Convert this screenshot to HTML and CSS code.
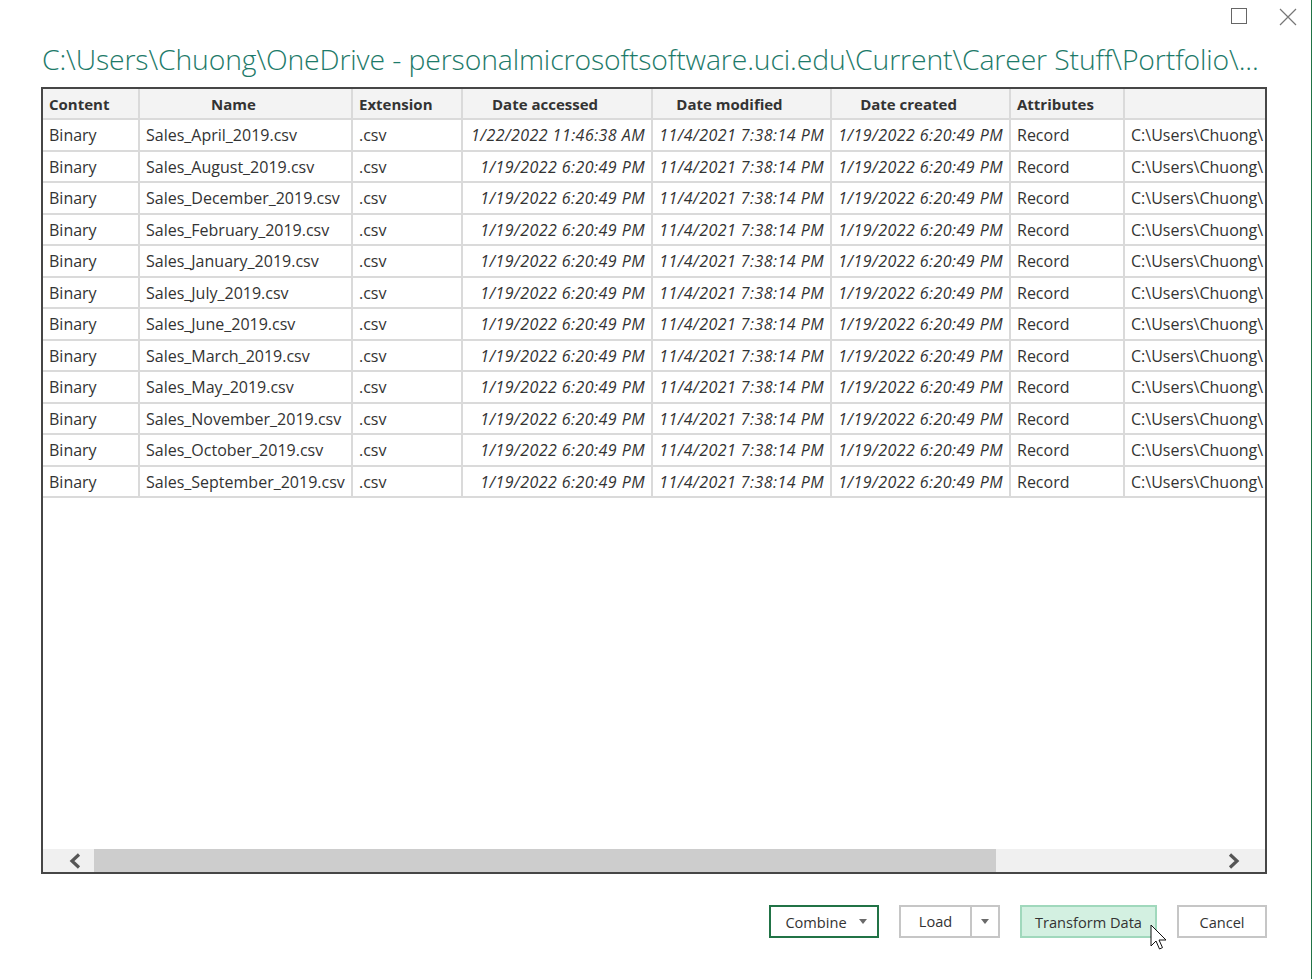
FILE: index.html
```html
<!DOCTYPE html>
<html>
<head>
<meta charset="utf-8">
<link rel="stylesheet" href="styles.css">
</head>
<body>
<div class="window">
  <div class="controls">
    <span class="ctl"><svg width="17" height="17" viewBox="0 0 17 17"><rect x="0.5" y="0.5" width="15" height="15" fill="none" stroke="#666" stroke-width="1"/></svg></span>
    <span class="ctl"><svg width="18" height="18" viewBox="0 0 18 18"><path d="M1 1 L17 17 M17 1 L1 17" stroke="#777" stroke-width="1.2" fill="none"/></svg></span>
  </div>
  <h1 class="title">C:\Users\Chuong\OneDrive - personalmicrosoftsoftware.uci.edu\Current\Career Stuff\Portfolio\...</h1>
  <div class="frame">
    <div class="grid">
      <div class="row head">
        <div class="c left">Content</div>
        <div class="c center">Name</div>
        <div class="c left">Extension</div>
        <div class="c center">Date accessed</div>
        <div class="c center">Date modified</div>
        <div class="c center">Date created</div>
        <div class="c left">Attributes</div>
        <div class="c left"></div>
      </div>
      <div class="row"><div class="c">Binary</div><div class="c">Sales_April_2019.csv</div><div class="c">.csv</div><div class="c dt">1/22/2022 11:46:38 AM</div><div class="c dt">11/4/2021 7:38:14 PM</div><div class="c dt">1/19/2022 6:20:49 PM</div><div class="c">Record</div><div class="c">C:\Users\Chuong\</div></div>
      <div class="row"><div class="c">Binary</div><div class="c">Sales_August_2019.csv</div><div class="c">.csv</div><div class="c dt">1/19/2022 6:20:49 PM</div><div class="c dt">11/4/2021 7:38:14 PM</div><div class="c dt">1/19/2022 6:20:49 PM</div><div class="c">Record</div><div class="c">C:\Users\Chuong\</div></div>
      <div class="row"><div class="c">Binary</div><div class="c">Sales_December_2019.csv</div><div class="c">.csv</div><div class="c dt">1/19/2022 6:20:49 PM</div><div class="c dt">11/4/2021 7:38:14 PM</div><div class="c dt">1/19/2022 6:20:49 PM</div><div class="c">Record</div><div class="c">C:\Users\Chuong\</div></div>
      <div class="row"><div class="c">Binary</div><div class="c">Sales_February_2019.csv</div><div class="c">.csv</div><div class="c dt">1/19/2022 6:20:49 PM</div><div class="c dt">11/4/2021 7:38:14 PM</div><div class="c dt">1/19/2022 6:20:49 PM</div><div class="c">Record</div><div class="c">C:\Users\Chuong\</div></div>
      <div class="row"><div class="c">Binary</div><div class="c">Sales_January_2019.csv</div><div class="c">.csv</div><div class="c dt">1/19/2022 6:20:49 PM</div><div class="c dt">11/4/2021 7:38:14 PM</div><div class="c dt">1/19/2022 6:20:49 PM</div><div class="c">Record</div><div class="c">C:\Users\Chuong\</div></div>
      <div class="row"><div class="c">Binary</div><div class="c">Sales_July_2019.csv</div><div class="c">.csv</div><div class="c dt">1/19/2022 6:20:49 PM</div><div class="c dt">11/4/2021 7:38:14 PM</div><div class="c dt">1/19/2022 6:20:49 PM</div><div class="c">Record</div><div class="c">C:\Users\Chuong\</div></div>
      <div class="row"><div class="c">Binary</div><div class="c">Sales_June_2019.csv</div><div class="c">.csv</div><div class="c dt">1/19/2022 6:20:49 PM</div><div class="c dt">11/4/2021 7:38:14 PM</div><div class="c dt">1/19/2022 6:20:49 PM</div><div class="c">Record</div><div class="c">C:\Users\Chuong\</div></div>
      <div class="row"><div class="c">Binary</div><div class="c">Sales_March_2019.csv</div><div class="c">.csv</div><div class="c dt">1/19/2022 6:20:49 PM</div><div class="c dt">11/4/2021 7:38:14 PM</div><div class="c dt">1/19/2022 6:20:49 PM</div><div class="c">Record</div><div class="c">C:\Users\Chuong\</div></div>
      <div class="row"><div class="c">Binary</div><div class="c">Sales_May_2019.csv</div><div class="c">.csv</div><div class="c dt">1/19/2022 6:20:49 PM</div><div class="c dt">11/4/2021 7:38:14 PM</div><div class="c dt">1/19/2022 6:20:49 PM</div><div class="c">Record</div><div class="c">C:\Users\Chuong\</div></div>
      <div class="row"><div class="c">Binary</div><div class="c">Sales_November_2019.csv</div><div class="c">.csv</div><div class="c dt">1/19/2022 6:20:49 PM</div><div class="c dt">11/4/2021 7:38:14 PM</div><div class="c dt">1/19/2022 6:20:49 PM</div><div class="c">Record</div><div class="c">C:\Users\Chuong\</div></div>
      <div class="row"><div class="c">Binary</div><div class="c">Sales_October_2019.csv</div><div class="c">.csv</div><div class="c dt">1/19/2022 6:20:49 PM</div><div class="c dt">11/4/2021 7:38:14 PM</div><div class="c dt">1/19/2022 6:20:49 PM</div><div class="c">Record</div><div class="c">C:\Users\Chuong\</div></div>
      <div class="row"><div class="c">Binary</div><div class="c">Sales_September_2019.csv</div><div class="c">.csv</div><div class="c dt">1/19/2022 6:20:49 PM</div><div class="c dt">11/4/2021 7:38:14 PM</div><div class="c dt">1/19/2022 6:20:49 PM</div><div class="c">Record</div><div class="c">C:\Users\Chuong\</div></div>
    </div>
    <div class="hscroll">
      <div class="arrow arrow-l"><svg width="14" height="16" viewBox="0 0 14 16"><path d="M11 1.5 L4 8 L11 14.5" fill="none" stroke="#555" stroke-width="3.2"/></svg></div>
      <div class="thumb"></div>
      <div class="track"></div>
      <div class="arrow arrow-r"><svg width="14" height="16" viewBox="0 0 14 16"><path d="M3 1.5 L10 8 L3 14.5" fill="none" stroke="#555" stroke-width="3.2"/></svg></div>
    </div>
  </div>
  <div class="buttons">
    <div class="btn combine">Combine <span class="tri"></span></div>
    <div class="btn split"><span class="main">Load</span><span class="drop"><span class="tri"></span></span></div>
    <div class="btn primary">Transform Data</div>
    <div class="btn cancel">Cancel</div>
  </div>
  <svg class="cursor" width="20" height="30" viewBox="0 0 20 30"><path d="M1 1 L1 22 L6 17 L9.5 25 L12.5 23.6 L9 16 L16 16 Z" fill="#fff" stroke="#111" stroke-width="1"/></svg>
</div>
</body>
</html>
```

FILE: styles.css
```css
* { box-sizing: border-box; }
html, body { margin: 0; padding: 0; background: #fff; }
body { font-family: "Open Sans", "Noto Sans", sans-serif; color: #333; }
.window {
  position: relative;
  width: 1312px;
  height: 979px;
  border-right: 1px solid #217346;
  background: #fff;
}
.controls {
  display: flex;
  justify-content: flex-end;
  gap: 31px;
  padding: 8px 14px 0 0;
  height: 41px;
}
.ctl { display: block; height: 18px; }
.title {
  margin: 0;
  padding-left: 42px;
  font-weight: 300;
  font-size: 28.35px;
  line-height: 36px;
  color: #1d7a69;
  white-space: nowrap;
  letter-spacing: -0.12px;
}
.frame {
  margin: 10px 0 0 41px;
  width: 1226px;
  height: 787px;
  border: 2px solid #464646;
  overflow: hidden;
  display: flex;
  flex-direction: column;
}
.grid { flex: 1; overflow: hidden; }
.row {
  display: grid;
  grid-template-columns: 97px 213px 110px 190px 179px 179px 114px 200px;
  width: 1282px;
  height: 31.5px;
}
.row.head { height: 31px; background: #f3f3f3; }
.c {
  border-right: 2px solid #dadada;
  border-bottom: 2px solid #dadada;
  padding: 1px 6px 0;
  font-size: 16px;
  line-height: 29px;
  white-space: nowrap;
  overflow: hidden;
  color: #333;
}
.head .c { font-weight: 700; font-size: 15px; color: #333; line-height: 29px; }
.head .center { text-align: center; padding-right: 30px; }
.dt { font-style: italic; text-align: right; padding-right: 6px; letter-spacing: 0.45px; }
.hscroll {
  height: 23px;
  display: flex;
  background: #f0f0f0;
  flex-shrink: 0;
}
.arrow { width: 51px; display: flex; align-items: center; justify-content: center; }
.arrow-l { padding-left: 12px; }
.arrow-r { padding-right: 12px; }
.thumb { width: 902px; background: #cdcdcd; }
.track { flex: 1; }
.buttons {
  display: flex;
  justify-content: flex-end;
  gap: 20px;
  margin-top: 31px;
  padding-right: 44px;
}
.btn {
  height: 33px;
  border: 2px solid #c6c6c6;
  display: flex;
  align-items: center;
  justify-content: center;
  font-size: 14.6px;
  color: #333;
  background: #fff;
}
.combine { width: 110px; border-color: #217346; gap: 12px; padding-left: 4px; }
.tri {
  width: 0; height: 0;
  border-left: 4.5px solid transparent;
  border-right: 4.5px solid transparent;
  border-top: 5px solid #6a6a6a;
  display: inline-block;
}
.split { width: 101px; justify-content: stretch; }
.split .main { flex: 1; text-align: center; border-right: 2px solid #c6c6c6; height: 100%; line-height: 29px; }
.split .drop { width: 26px; display: flex; align-items: center; justify-content: center; }
.primary { width: 137px; background: #d3f0e1; border-color: #a0d8bc; }
.cancel { width: 90px; }
.cursor { position: absolute; left: 1150px; top: 924px; }
```
